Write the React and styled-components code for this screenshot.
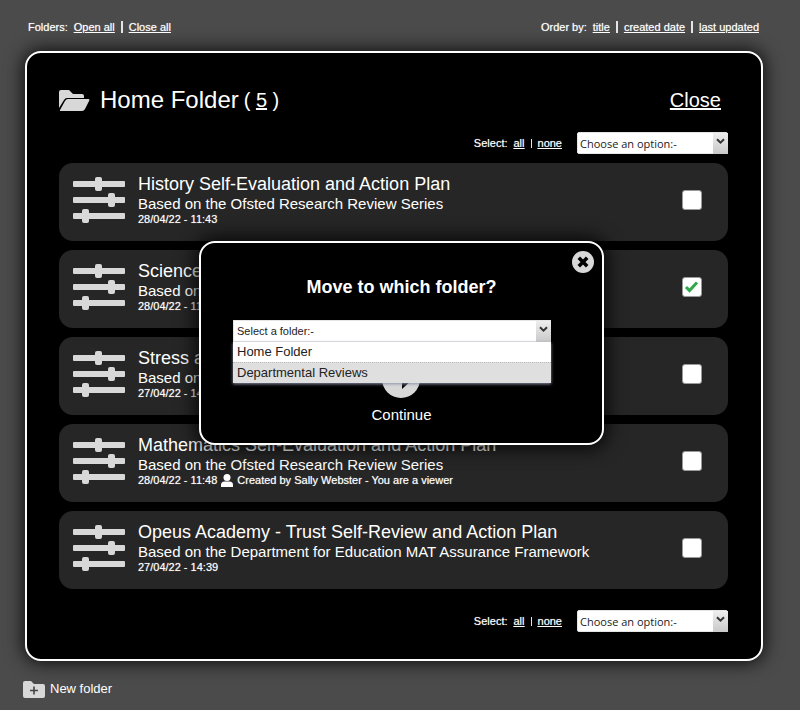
import React, {useState} from "react";
import styled, {createGlobalStyle} from "styled-components";

const GlobalStyle = createGlobalStyle`
  * {
    box-sizing: border-box;
  }

  body {
    margin: 0;
    background: #4b4b4b;
    color: #fff;
    font-family: "Liberation Sans", Arial, sans-serif;
  }

  button {
    font-family: inherit;
    color: inherit;
  }
`;

const Page = styled.div`
  position: relative;
  padding: 19px 37px 9px 25px;
`;

const TopBar = styled.div`
  display: flex;
  justify-content: space-between;
  padding: 0 4px 0 3px;
  margin-bottom: 16px;
`;

const LinkGroup = styled.nav`
  display: flex;
  align-items: center;
  gap: 6px;
  font-size: 11px;
  line-height: 16px;
  text-shadow: 0 0 1px rgba(255, 255, 255, 0.6);
`;

const TextLink = styled.a`
  color: inherit;
  text-decoration: underline;
`;

const Divider = styled.span`
  width: ${(props) => (props.$thin ? 1 : 2)}px;
  height: ${(props) => (props.$thin ? 9 : 12)}px;
  background: #e4e4e4;
`;

const Panel = styled.main`
  padding: 30px 33px 27px 32px;
  border: 2px solid #fff;
  border-radius: 16px;
  background: #000;
  box-shadow: 0 0 18px 2px rgba(0, 0, 0, 0.8);
`;

const PanelHeader = styled.header`
  display: flex;
  align-items: center;
  justify-content: space-between;
  height: 34px;
  padding-right: 7px;
  margin-bottom: 15px;
`;

const FolderTitle = styled.h1`
  display: flex;
  align-items: center;
  gap: 5px;
  margin: 0;
  font-size: 24px;
  font-weight: normal;
  line-height: 28px;

  svg {
    margin-right: 5px;
  }
`;

const Count = styled.span`
  font-size: 20px;
`;

const CloseLink = styled(TextLink)`
  font-size: 20px;
  line-height: 24px;
`;

const SelectBar = styled.div`
  display: flex;
  align-items: center;
  justify-content: flex-end;
  gap: 15px;
`;

const OptionSelect = styled.select`
  appearance: none;
  width: 151px;
  height: 22px;
  padding: 0 18px 0 2px;
  border: 1px solid #e4e4e4;
  border-radius: 2px;
  background: #fff;
  color: #222;
  font-family: "Open Sans", Tahoma, sans-serif;
  font-size: 11px;
`;

const FolderSelect = styled(OptionSelect)`
  width: 100%;
  padding-left: 3px;
  border-radius: 0;
  font-family: "Liberation Sans", Arial, sans-serif;
`;

const SelectWrap = styled.div`
  position: relative;
  display: flex;
`;

const Arrow = styled.span`
  position: absolute;
  top: 1px;
  right: 0;
  display: flex;
  justify-content: center;
  width: 15px;
  height: 21px;
  padding-top: 5px;
  background: linear-gradient(#eee, #c8c8c8);
  pointer-events: none;
`;

const PlanList = styled.ul`
  display: flex;
  flex-direction: column;
  gap: 9px;
  margin: 9px 0 21px;
  padding: 0;
  list-style: none;
`;

const PlanCard = styled.li`
  display: flex;
  align-items: center;
  height: 78px;
  padding: 0 26px 4px 13px;
  border-radius: 14px;
  background: #262626;
`;

const PlanText = styled.div`
  flex: 1;
  margin-left: 13px;
`;

const PlanTitle = styled.h2`
  margin: 0;
  font-size: 18px;
  font-weight: normal;
  line-height: 21px;
`;

const PlanBasis = styled.p`
  margin: 0;
  font-size: 15px;
  line-height: 17px;
`;

const PlanMeta = styled.p`
  display: flex;
  align-items: center;
  gap: 4px;
  margin: 0;
  font-size: 11px;
  line-height: 14px;
  text-shadow: 0 0 1px rgba(255, 255, 255, 0.6);
`;

const Tick = styled.input`
  appearance: none;
  width: 20px;
  height: 20px;
  margin: 0;
  border: 1px solid #999;
  border-radius: 3px;
  background: #fff;
`;

const TickBox = styled.label`
  position: relative;
  display: flex;

  svg {
    position: absolute;
    top: 3px;
    left: 2px;
    pointer-events: none;
  }
`;

const NewFolder = styled.button`
  display: flex;
  align-items: center;
  gap: 5px;
  margin: 18px 0 0 -2px;
  padding: 0;
  border: 0;
  background: none;
  font-size: 13px;
  line-height: 20px;
`;

const Overlay = styled.div`
  position: absolute;
  top: 241px;
  left: 0;
  right: 0;
  display: flex;
  justify-content: center;
  padding-left: 3px;
`;

const Dialog = styled.section`
  position: relative;
  width: 405px;
  padding: 33px 32px 19px;
  border: 2px solid #fff;
  border-radius: 16px;
  background: #000;
  box-shadow: 0 0 18px 4px rgba(0, 0, 0, 0.8);
`;

const DialogTitle = styled.h2`
  margin: 0 0 21px;
  font-size: 18px;
  line-height: 23px;
  text-align: center;
`;

const CloseButton = styled.button`
  position: absolute;
  top: 8px;
  right: 8px;
  padding: 0;
  border: 0;
  background: none;
  line-height: 0;
`;

const FolderPicker = styled(SelectWrap)`
  margin-right: 19px;
`;

const Menu = styled.ul`
  position: absolute;
  z-index: 1;
  top: 22px;
  left: 0;
  right: 0;
  margin: 0;
  padding: 0;
  list-style: none;
  background: #fff;
  color: #222;
  font-size: 13px;
  line-height: 20px;
  box-shadow: 0 1px 3px #8c93a5;
`;

const MenuItem = styled.li`
  padding: 0 4px;
  background: ${(props) => (props.$active ? "#dfdfdf" : "#fff")};
  border-top: ${(props) => (props.$active ? "1px dotted #bbb" : "0")};
`;

const ContinueButton = styled.button`
  display: flex;
  flex-direction: column;
  align-items: center;
  gap: 8px;
  margin: 18px auto 0;
  padding: 0;
  border: 0;
  background: none;
  font-size: 15px;
  line-height: 18px;
`;

const plans = [
    {title: "History Self-Evaluation and Action Plan", basis: "Based on the Ofsted Research Review Series", date: "28/04/22 - 11:43"},
    {title: "Science Self-Evaluation and Action Plan", basis: "Based on the Ofsted Research Review Series", date: "28/04/22 - 11:45"},
    {title: "Stress and Wellbeing Action Plan", basis: "Based on the Ofsted Research Review Series", date: "27/04/22 - 14:42"},
    {title: "Mathematics Self-Evaluation and Action Plan", basis: "Based on the Ofsted Research Review Series", date: "28/04/22 - 11:48", note: "Created by Sally Webster - You are a viewer"},
    {title: "Opeus Academy - Trust Self-Review and Action Plan", basis: "Based on the Department for Education MAT Assurance Framework", date: "27/04/22 - 14:39"},
];

const Chevron = () => (
    <svg width="9" height="7" viewBox="0 0 9 7" aria-hidden="true">
        <path d="M1 1.2 4.5 4.6 8 1.2" fill="none" stroke="#333" strokeWidth="2" />
    </svg>
);

const OpenFolderIcon = () => (
    <svg width="31" height="21" viewBox="0 0 31 21" fill="#d8d8d8" aria-hidden="true">
        <path d="M0 18V2Q0 0 2 0H10L14 4H23Q25 4 25 6V8H8Q6 8 5 10Z" />
        <path d="M1 20 6 11Q7 9 9 9H29.5Q31 9 30.3 10.5L26 19Q25 21 23 21H1.5Q.5 21 1 20Z" />
    </svg>
);

const SlidersIcon = () => (
    <svg width="53" height="46" viewBox="0 0 53 46" fill="#d8d8d8" aria-hidden="true">
        <rect x="1" y="4" width="52" height="6" rx="1" />
        <rect x="23" y="0" width="7" height="14" rx="2" />
        <rect x="1" y="20" width="52" height="6" rx="1" />
        <rect x="36" y="16" width="7" height="14" rx="2" />
        <rect x="1" y="36" width="52" height="6" rx="1" />
        <rect x="10" y="32" width="7" height="14" rx="2" />
    </svg>
);

const UserIcon = () => (
    <svg width="12" height="13" viewBox="0 0 12 13" fill="#fff" aria-hidden="true">
        <circle cx="6" cy="3.5" r="3.5" />
        <path d="M0 13V11Q0 7.5 3.5 7.5H8.5Q12 7.5 12 11V13Z" />
    </svg>
);

const NewFolderIcon = () => (
    <svg width="22" height="17" viewBox="0 0 22 17" aria-hidden="true">
        <path d="M0 15V2Q0 0 2 0H8L11 3H20Q22 3 22 5V15Q22 17 20 17H2Q0 17 0 15Z" fill="#d8d8d8" />
        <path d="M11 5.5V13.5M7 9.5H15" stroke="#444" strokeWidth="1.6" />
    </svg>
);

const TickIcon = () => (
    <svg width="15" height="13" viewBox="0 0 15 13" aria-hidden="true">
        <path d="M2 7 5.5 10.5 13 2.5" fill="none" stroke="#2fa84a" strokeWidth="3" />
    </svg>
);

const CrossIcon = () => (
    <svg width="22" height="22" viewBox="0 0 22 22" aria-hidden="true">
        <circle cx="11" cy="11" r="11" fill="#d8d8d8" />
        <path d="M6.8 6.8 15.2 15.2M15.2 6.8 6.8 15.2" stroke="#000" strokeWidth="3.6" />
    </svg>
);

const ArrowCircleIcon = () => (
    <svg width="38" height="38" viewBox="0 0 38 38" aria-hidden="true">
        <circle cx="19" cy="19" r="19" fill="#d8d8d8" />
        <path d="M7 16H19V8L31 19 20 29V22H7Z" fill="#000" />
    </svg>
);

function SelectControls({label}) {
    return (
        <SelectBar>
            <LinkGroup>
                <span>Select:</span>
                <TextLink href="#all">all</TextLink>
                <Divider $thin />
                <TextLink href="#none">none</TextLink>
            </LinkGroup>
            <SelectWrap>
                <OptionSelect aria-label={label}>
                    <option>Choose an option:-</option>
                </OptionSelect>
                <Arrow><Chevron /></Arrow>
            </SelectWrap>
        </SelectBar>
    );
}

function MoveDialog({onClose}) {
    return (
        <Overlay>
            <Dialog role="dialog" aria-labelledby="move-title">
                <CloseButton type="button" aria-label="Close dialog" onClick={onClose}>
                    <CrossIcon />
                </CloseButton>
                <DialogTitle id="move-title">Move to which folder?</DialogTitle>
                <FolderPicker>
                    <FolderSelect aria-labelledby="move-title">
                        <option>Select a folder:-</option>
                    </FolderSelect>
                    <Arrow><Chevron /></Arrow>
                    <Menu role="listbox">
                        <MenuItem role="option">Home Folder</MenuItem>
                        <MenuItem role="option" aria-selected="true" $active>Departmental Reviews</MenuItem>
                    </Menu>
                </FolderPicker>
                <ContinueButton type="button">
                    <ArrowCircleIcon />
                    Continue
                </ContinueButton>
            </Dialog>
        </Overlay>
    );
}

function App() {

    const [selected, setSelected] = useState([1]);
    const [moving, setMoving] = useState(true);

    const toggle = (index) => {
        setSelected(selected.includes(index) ? selected.filter((i) => i !== index) : [...selected, index]);
    };

    return (
        <Page>
            <GlobalStyle />
            <TopBar>
                <LinkGroup>
                    <span>Folders:</span>
                    <TextLink href="#open">Open all</TextLink>
                    <Divider />
                    <TextLink href="#close">Close all</TextLink>
                </LinkGroup>
                <LinkGroup>
                    <span>Order by:</span>
                    <TextLink href="#title">title</TextLink>
                    <Divider />
                    <TextLink href="#created">created date</TextLink>
                    <Divider />
                    <TextLink href="#updated">last updated</TextLink>
                </LinkGroup>
            </TopBar>
            <Panel>
                <PanelHeader>
                    <FolderTitle>
                        <OpenFolderIcon />
                        Home Folder
                        <Count>( <TextLink href="#count">5</TextLink> )</Count>
                    </FolderTitle>
                    <CloseLink href="#close-folder">Close</CloseLink>
                </PanelHeader>
                <SelectControls label="Action for selected items" />
                <PlanList>
                    {plans.map((plan, index) => (
                        <PlanCard key={plan.title}>
                            <SlidersIcon />
                            <PlanText>
                                <PlanTitle>{plan.title}</PlanTitle>
                                <PlanBasis>{plan.basis}</PlanBasis>
                                <PlanMeta>
                                    {plan.date}
                                    {plan.note && <UserIcon />}
                                    {plan.note}
                                </PlanMeta>
                            </PlanText>
                            <TickBox>
                                <Tick
                                    type="checkbox"
                                    aria-label={plan.title}
                                    checked={selected.includes(index)}
                                    onChange={() => toggle(index)}
                                />
                                {selected.includes(index) && <TickIcon />}
                            </TickBox>
                        </PlanCard>
                    ))}
                </PlanList>
                <SelectControls label="Action for selected items, bottom" />
            </Panel>
            <NewFolder type="button">
                <NewFolderIcon />
                New folder
            </NewFolder>
            {moving && <MoveDialog onClose={() => setMoving(false)} />}
        </Page>
    );
}

export default App;
